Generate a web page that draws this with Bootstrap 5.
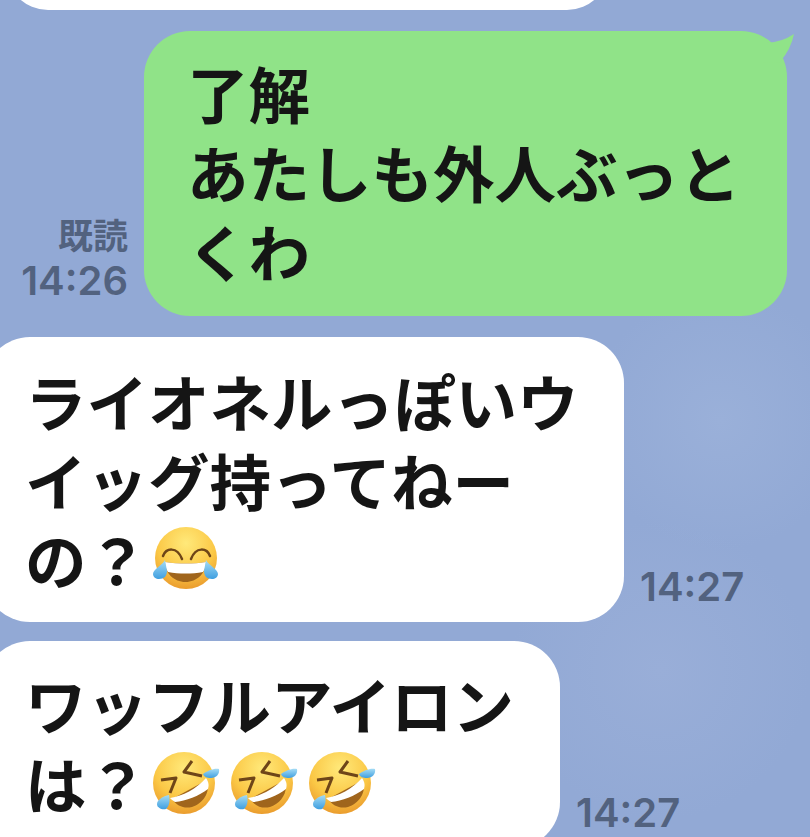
<!DOCTYPE html>
<html lang="ja">
<head>
  <meta charset="UTF-8">
  <title>トーク</title>
  <link href="https://cdn.jsdelivr.net/npm/bootstrap@5.3.2/dist/css/bootstrap.min.css" rel="stylesheet">
  <style>
    html, body { height: 100%; overflow: hidden; }
    body {
      background:
        radial-gradient(circle at 720px 420px, #9ab0d9 0, rgba(154, 176, 217, 0) 130px),
        radial-gradient(circle at 660px 670px, #99aed8 0, rgba(153, 174, 216, 0) 150px),
        #92a9d5;
      font-family: "Noto Sans CJK JP", "Liberation Sans", sans-serif;
      color: #151515;
    }
    .talk { padding-right: 23px; }
    .bubble { font-size: 61.5px; line-height: 79px; font-weight: 700; }
    .bubble-top { width: 603px; height: 70px; margin-top: -60px; margin-left: 6px; background: #fff; border-radius: 0 0 42px 42px; }
    .bubble-me { width: 643px; height: 285px; margin-top: 21px; padding: 22px 0 0 43px; background: #90e388; border-radius: 46px; }
    .bubble-you { background: #fff; border-radius: 46px; margin-left: -16px; padding-left: 41px; }
    .you-a { width: 640px; height: 285px; margin-top: 21px; padding-top: 24px; }
    .you-b { width: 576px; height: 207px; margin-top: 19px; padding-top: 23px; }
    .tail { position: absolute; left: 613px; top: -8px; width: 40px; height: 40px; }
    .stamp { font-family: Inter, "Noto Sans CJK JP", sans-serif; font-size: 40px; line-height: 47px; font-weight: 600; color: #52627f; text-align: right; padding-bottom: 12px; }
    .stamp-read { font-family: "Noto Sans CJK JP", sans-serif; font-size: 35px; font-weight: 700; }
    .moji { width: 68px; height: 68px; vertical-align: -7px; margin-right: 10px; }
    .moji-first { margin-left: 4px; }
  </style>
</head>
<body>
  <svg width="0" height="0" class="d-block">
    <defs>
      <radialGradient id="face" cx="50%" cy="26%" r="78%">
        <stop offset="0" stop-color="#ffe97a"/>
        <stop offset=".6" stop-color="#fbc846"/>
        <stop offset="1" stop-color="#e8962a"/>
      </radialGradient>
      <linearGradient id="drop" x1="0" y1="0" x2="0" y2="1">
        <stop offset="0" stop-color="#a5dcf5"/>
        <stop offset="1" stop-color="#3f9fe0"/>
      </linearGradient>
      <symbol id="joy" viewBox="0 0 68 68">
        <circle cx="34" cy="34" r="31" fill="url(#face)"/>
        <path d="M11 32c3-8 14-10 19 3M58 32c-3-8-14-10-19 3" fill="none" stroke="#6e4518" stroke-width="2.5" stroke-linecap="round"/>
        <path d="M13 38c14 2 28 2 41 0 0 11-9 20-20.500 20S13 49 13 38z" fill="#a0651c"/>
        <path d="M13 38c14 2 28 2 41 0 0 4-1 7-3 10-11 2-24 2-35 0-2-3-3-6-3-10z" fill="#fff"/>
        <path d="M13 36c-2 5-12 9-12 14 0 3 3 5 6 5 5 0 8-3 8-8z" fill="url(#drop)"/>
        <path d="M54 36c2 5 12 9 12 14 0 3-3 5-6 5-5 0-8-3-8-8z" fill="url(#drop)"/>
      </symbol>
      <symbol id="rofl" viewBox="0 0 68 68">
        <circle cx="32" cy="35" r="31" fill="url(#face)"/>
        <path d="M9 32l15-2-6 15M40 13l-8 11 18 4" fill="none" stroke="#6e4518" stroke-width="3" stroke-linejoin="round"/>
        <path d="M55 32c4 13-5 24-15 27-8 2-15-1-20-8z" fill="#a0651c"/>
        <path d="M54 30c3 4 3 8 2 11-9 7-22 12-33 13-2-1-4-3-5-4 13-2 26-9 36-20z" fill="#fff"/>
        <path d="M51 26c4-3 11-6 16-5 1 5-3 9-8 9-4 0-7-1-8-4z" fill="url(#drop)"/>
        <path d="M17 47c1 5 1 10-3 14-4 1-9-1-9-5 0-4 6-8 12-9z" fill="url(#drop)"/>
      </symbol>
    </defs>
  </svg>

  <div class="talk d-flex flex-column">
    <div class="bubble-top"></div>

    <div class="d-flex justify-content-end align-items-end gap-3">
      <div class="stamp">
        <div class="stamp-read">既読</div>
        <div>14:26</div>
      </div>
      <div class="bubble bubble-me position-relative">
        了解<br>あたしも外人ぶっと<br>くわ
        <svg class="tail" viewBox="0 0 40 40"><path d="M10 20Q25 19 37 11 34 26 23 39L5 40Z" fill="#90e388"/></svg>
      </div>
    </div>

    <div class="d-flex align-items-end gap-3">
      <div class="bubble bubble-you you-a">
        ライオネルっぽいウ<br>イッグ持ってねー<br>の？<svg class="moji moji-first"><use href="#joy"/></svg>
      </div>
      <div class="stamp">14:27</div>
    </div>

    <div class="d-flex align-items-end gap-3">
      <div class="bubble bubble-you you-b">
        ワッフルアイロン<br>は？<svg class="moji moji-first"><use href="#rofl"/></svg><svg class="moji"><use href="#rofl"/></svg><svg class="moji"><use href="#rofl"/></svg>
      </div>
      <div class="stamp">14:27</div>
    </div>
  </div>

  <script src="https://cdn.jsdelivr.net/npm/bootstrap@5.3.2/dist/js/bootstrap.bundle.min.js"></script>
</body>
</html>
